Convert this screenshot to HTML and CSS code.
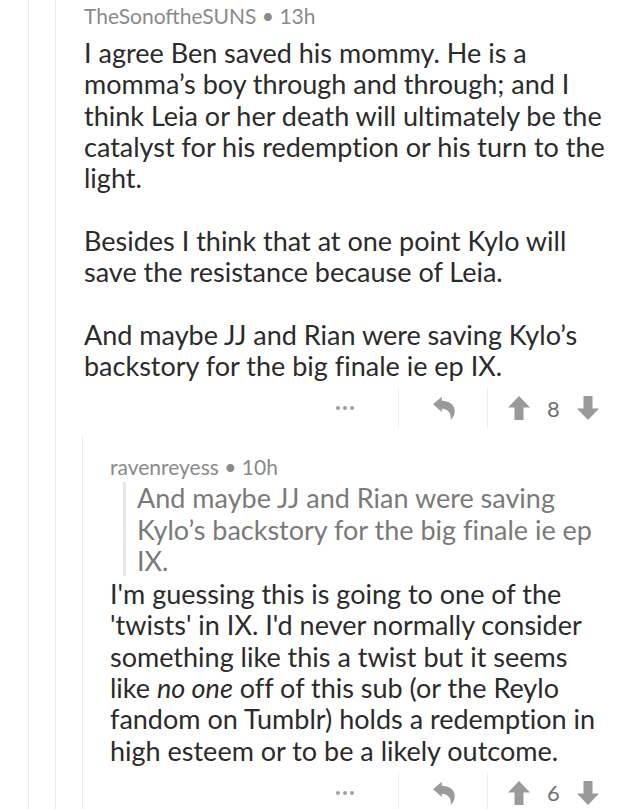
FILE: index.html
```html
<html>
<head>
    <title>Comment thread</title>
    <link rel="stylesheet" href="styles.css">
</head>
<body>
    <div class="rail">
        <div class="rail">
            <div class="comment top">
                <div class="byline">TheSonoftheSUNS &bull; 13h</div>
                <div class="body">
                    <p>I agree Ben saved his mommy. He is a momma’s boy through and through; and I think Leia or her death will ultimately be the catalyst for his redemption or his turn to the light.</p>
                    <p>Besides I think that at one point Kylo will save the resistance because of Leia.</p>
                    <p>And maybe JJ and Rian were saving Kylo’s backstory for the big finale ie ep IX.</p>
                </div>
                <div class="actions">
                    <div class="more">
                        <span class="dot"></span><span class="dot"></span><span class="dot"></span>
                    </div>
                    <div class="reply">
                        <svg width="26" height="26" viewBox="0 0 24 24"><path d="M1 8.5 L9 1.5 V5.4 C16.5 5.6 21 9.5 21 15 C21 18.2 19.4 20.8 17.2 23 C18.2 17.8 15.6 12.8 9 12.6 V15.6 Z" fill="#9a9a9a"/></svg>
                    </div>
                    <div class="vote">
                        <svg width="24" height="26" viewBox="0 0 24 26"><path d="M12 1 L23 12.5 H16.5 V25 H7.5 V12.5 H1 Z" fill="#9a9a9a"/></svg>
                        <span class="score">8</span>
                        <svg width="24" height="26" viewBox="0 0 24 26"><path d="M12 25 L23 13.5 H16.5 V1 H7.5 V13.5 H1 Z" fill="#9a9a9a"/></svg>
                    </div>
                </div>
            </div>
            <div class="rail nested">
                <div class="comment child">
                    <div class="byline">ravenreyess &bull; 10h</div>
                    <div class="body">
                        <blockquote>And maybe JJ and Rian were saving Kylo’s backstory for the big finale ie ep IX.</blockquote>
                        <p>I'm guessing this is going to one of the 'twists' in IX. I'd never normally consider something like this a twist but it seems like <em>no one</em> off of this sub (or the Reylo fandom on Tumblr) holds a redemption in high esteem or to be a likely outcome.</p>
                    </div>
                    <div class="actions">
                        <div class="more">
                            <span class="dot"></span><span class="dot"></span><span class="dot"></span>
                        </div>
                        <div class="reply">
                            <svg width="26" height="26" viewBox="0 0 24 24"><path d="M1 8.5 L9 1.5 V5.4 C16.5 5.6 21 9.5 21 15 C21 18.2 19.4 20.8 17.2 23 C18.2 17.8 15.6 12.8 9 12.6 V15.6 Z" fill="#9a9a9a"/></svg>
                        </div>
                        <div class="vote">
                            <svg width="24" height="26" viewBox="0 0 24 26"><path d="M12 1 L23 12.5 H16.5 V25 H7.5 V12.5 H1 Z" fill="#9a9a9a"/></svg>
                            <span class="score">6</span>
                            <svg width="24" height="26" viewBox="0 0 24 26"><path d="M12 25 L23 13.5 H16.5 V1 H7.5 V13.5 H1 Z" fill="#9a9a9a"/></svg>
                        </div>
                    </div>
                </div>
            </div>
        </div>
    </div>
</body>
</html>
```

FILE: styles.css
```css
body {
    margin: 0;
    background-color: white;
    font-family: Lato, "Open Sans", sans-serif;
    color: #2b2b2b;
    overflow: hidden;
}
.rail {
    margin-left: 28px;
    border-left: 1px solid #ebebeb;
    min-height: 809px;
}
.rail .rail {
    margin-left: 26px;
}
.rail.nested {
    margin-top: 8px;
    min-height: 0;
}
.comment {
    padding-right: 32px;
}
.top {
    padding-left: 28px;
    padding-top: 3px;
}
.child {
    padding-left: 27px;
    padding-top: 18px;
}
.byline {
    font-size: 21px;
    line-height: 25px;
    color: #8a8a8a;
}
.body {
    font-size: 27px;
    line-height: 31.3px;
    font-variant-ligatures: none;
}
.top .body {
    margin-top: 9px;
}
.child .body {
    margin-top: 3px;
}
.body p {
    margin: 0 0 31.3px 0;
}
.body p:last-child {
    margin-bottom: 0;
}
blockquote {
    margin: 0 0 2px 13px;
    padding-left: 11px;
    border-left: 3px solid #e6e6e6;
    color: #7a7a7a;
}
.actions {
    display: flex;
    justify-content: flex-end;
    height: 40px;
    margin-top: 7px;
    margin-right: 3px;
}
.actions > div {
    display: flex;
    align-items: center;
    justify-content: center;
}
.more {
    width: 106px;
    gap: 3px;
}
.dot {
    width: 4px;
    height: 4px;
    border-radius: 50%;
    background-color: #a0a0a0;
}
.reply {
    width: 89px;
    border-left: 1px solid #ededed;
    padding-left: 4px;
    box-sizing: border-box;
}
.vote {
    width: 118px;
    border-left: 1px solid #ededed;
    justify-content: space-between !important;
    padding: 0 5px 0 19px;
    box-sizing: border-box;
}
.score {
    font-size: 22px;
    color: #707070;
}
```
